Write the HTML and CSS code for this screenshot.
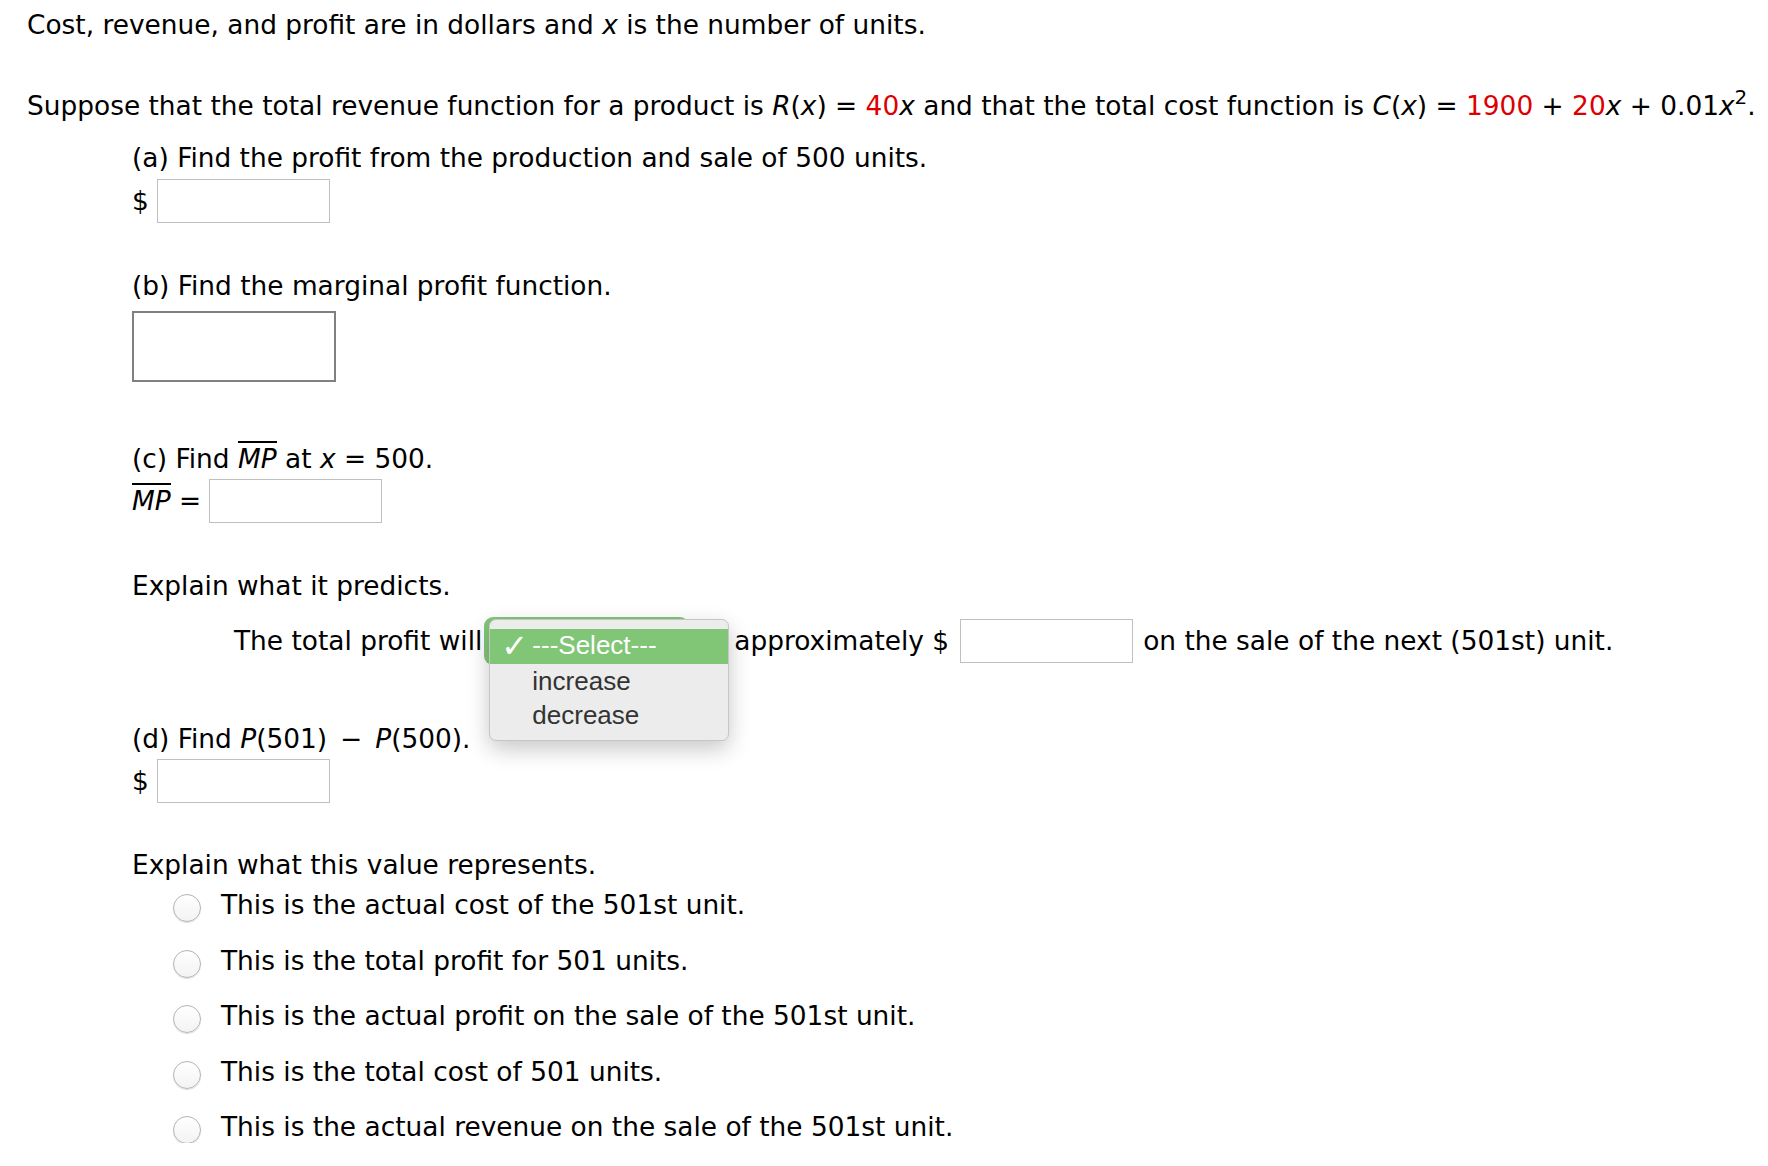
FILE: index.html
```html
<!DOCTYPE html>
<html lang="en">

<head>
    <meta charset="UTF-8">
    <title>Marginal Profit</title>
    <link rel="stylesheet" href="styles.css">
</head>

<body>
    <div class="page">
        <p class="intro">Cost, revenue, and profit are in dollars and <i>x</i> is the number of units.</p>
        <p class="setup">Suppose that the total revenue function for a product is <i>R</i>(<i>x</i>) = <span class="given">40</span><i>x</i> and that the total cost function is <i>C</i>(<i>x</i>) = <span class="given">1900</span> + <span class="given">20</span><i>x</i> + 0.01<i>x</i><sup>2</sup>.</p>

        <div class="parts">
            <p class="prompt part-a">(a) Find the profit from the production and sale of 500 units.</p>
            <div class="answer row-a">
                <span>$</span>
                <span class="field"></span>
            </div>

            <p class="prompt part-b">(b) Find the marginal profit function.</p>
            <div class="expr-box"></div>

            <p class="prompt part-c">(c) Find <span class="bar"><i>MP</i></span> at <i>x</i> = 500.</p>
            <div class="answer row-c">
                <span><span class="bar"><i>MP</i></span> =</span>
                <span class="field"></span>
            </div>

            <p class="prompt explain-c">Explain what it predicts.</p>
            <div class="answer predict">
                <span>The total profit will</span>
                <div class="select-slot">
                    <div class="select-control"></div>
                    <ul class="menu">
                        <li class="chosen"><span class="tick">&#10003;</span>---Select---</li>
                        <li>increase</li>
                        <li>decrease</li>
                    </ul>
                </div>
                <span>approximately $</span>
                <span class="field"></span>
                <span>on the sale of the next (501st) unit.</span>
            </div>

            <p class="prompt part-d">(d) Find <i>P</i>(501)<span class="op">&minus;</span><i>P</i>(500).</p>
            <div class="answer row-d">
                <span>$</span>
                <span class="field"></span>
            </div>

            <p class="prompt explain-d">Explain what this value represents.</p>
            <ul class="choices">
                <li><span class="radio"></span>This is the actual cost of the 501st unit.</li>
                <li><span class="radio"></span>This is the total profit for 501 units.</li>
                <li><span class="radio"></span>This is the actual profit on the sale of the 501st unit.</li>
                <li><span class="radio"></span>This is the total cost of 501 units.</li>
                <li><span class="radio"></span>This is the actual revenue on the sale of the 501st unit.</li>
            </ul>
        </div>
    </div>
</body>

</html>
```

FILE: styles.css
```css
html,
body {
    margin: 0;
    background: #fff;
}

body {
    font-family: "DejaVu Sans", Verdana, sans-serif;
    font-size: 26.4px;
    line-height: 32px;
    color: #000;
}

p,
ul {
    margin: 0;
    padding: 0;
}

.page {
    padding: 9px 0 0 27px;
}

.intro,
.setup {
    white-space: nowrap;
}

.setup {
    margin-top: 49px;
}

.given {
    color: #dd0000;
}

sup {
    font-size: 20px;
    line-height: 0;
    vertical-align: 11px;
}

.op {
    margin: 0 13px;
}

.parts {
    padding-left: 105px;
}

.prompt {
    white-space: nowrap;
}

.answer {
    display: flex;
    align-items: center;
    gap: 8px;
    height: 44px;
    white-space: nowrap;
}

.field {
    display: inline-block;
    width: 173px;
    height: 44px;
    box-sizing: border-box;
    border: 1px solid #c0c0c0;
    background: #fff;
}

.bar {
    border-top: 2px solid #000;
}

.part-a {
    margin-top: 20px;
}

.row-a {
    margin-top: 5px;
}

.part-b {
    margin-top: 47px;
}

.expr-box {
    margin-top: 9px;
    width: 204px;
    height: 71px;
    box-sizing: border-box;
    border: 2px solid #808080;
}

.part-c {
    margin-top: 61px;
}

.row-c {
    margin-top: 4px;
}

.explain-c {
    margin-top: 47px;
}

.predict {
    margin-top: 17px;
    padding-left: 102px;
    gap: 2px;
}

.predict .field {
    margin: 0 8px 0 9px;
}

/* dropdown, opened */
.select-slot {
    position: relative;
    width: 248px;
    height: 48px;
}

.select-control {
    width: 205px;
    height: 48px;
    border-radius: 9px;
    background: #82c779;
}

.menu {
    position: absolute;
    top: 2px;
    left: 5px;
    width: 240px;
    height: 122px;
    box-sizing: border-box;
    padding-top: 9px;
    list-style: none;
    background: #ececec;
    border: 1px solid #c6c6c6;
    border-radius: 7px;
    box-shadow: 0 8px 22px rgba(0, 0, 0, 0.22);
    font-family: "Liberation Sans", Arial, sans-serif;
    font-size: 26px;
    line-height: 34px;
    color: #333;
    z-index: 5;
}

.menu li {
    padding-left: 42px;
    height: 34px;
    position: relative;
}

.menu li.chosen {
    background: #80c676;
    color: #fff;
    height: 35px;
    line-height: 33px;
}

.tick {
    position: absolute;
    left: 11px;
    top: 1px;
    font-family: "DejaVu Sans", sans-serif;
    font-size: 32px;
    font-weight: bold;
}

.part-d {
    margin-top: 60px;
}

.row-d {
    margin-top: 4px;
}

.explain-d {
    margin-top: 46px;
}

.choices {
    list-style: none;
    margin-top: 8px;
    padding-left: 41px;
    display: flex;
    flex-direction: column;
    gap: 23.5px;
}

.choices li {
    display: flex;
    align-items: center;
    height: 32px;
    white-space: nowrap;
}

.radio {
    width: 28px;
    height: 28px;
    box-sizing: border-box;
    margin: 6px 20px 0 0;
    border-radius: 50%;
    border: 1px solid #b4b4b4;
    background: linear-gradient(#ffffff, #f3f3f3);
    box-shadow: 0 1px 1px rgba(0, 0, 0, 0.12);
}
```
